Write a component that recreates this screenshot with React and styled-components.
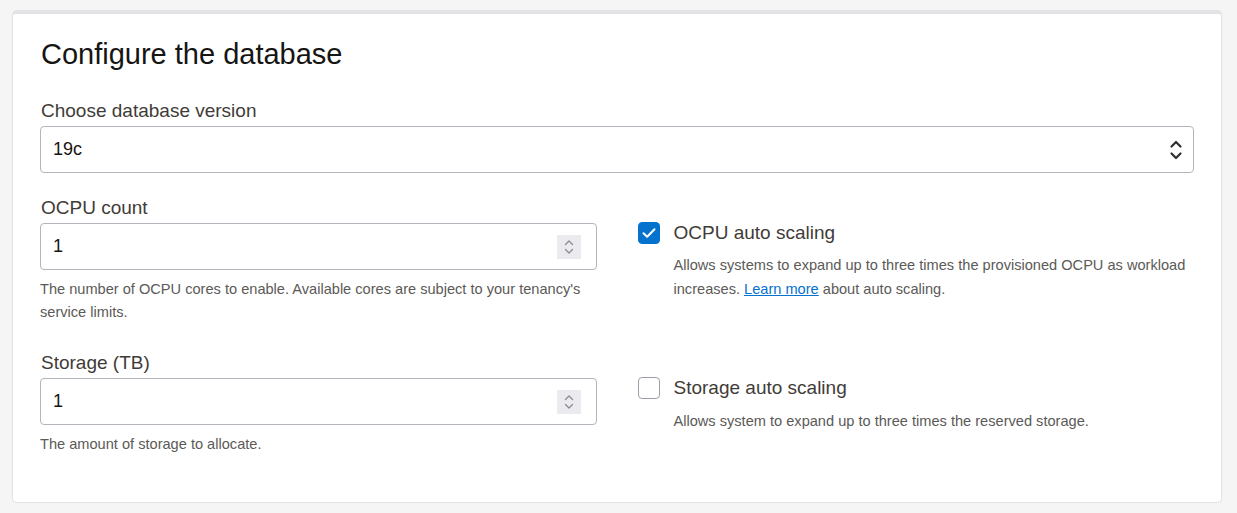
import styled, { createGlobalStyle } from 'styled-components'

const GlobalStyle = createGlobalStyle`
  body {
    margin: 0;
    background: #f5f5f5;
    font-family: "Liberation Sans", Arial, sans-serif;
  }
`

export default function App() {
  return (
    <>
      <GlobalStyle />
      <Page>
        <Card>
          <Title>Configure the database</Title>
          <Field>
            <Label>Choose database version</Label>
            <InputBox>
              <Value>19c</Value>
              <SelectArrows />
            </InputBox>
          </Field>
          <Grid>
            <Field>
              <Label>OCPU count</Label>
              <InputBox>
                <Value>1</Value>
                <Spinner />
              </InputBox>
              <Help>
                The number of OCPU cores to enable. Available cores are subject
                to your tenancy's service limits.
              </Help>
            </Field>
            <CheckField>
              <CheckRow>
                <Checkbox checked>
                  <svg width="14" height="12" viewBox="0 0 14 12">
                    <path
                      d="M1.5 6.2 L5.2 9.8 L12.5 2.2"
                      fill="none"
                      stroke="#fff"
                      strokeWidth="2"
                      strokeLinecap="round"
                      strokeLinejoin="round"
                    />
                  </svg>
                </Checkbox>
                <CheckLabel>OCPU auto scaling</CheckLabel>
              </CheckRow>
              <CheckHelp>
                Allows systems to expand up to three times the provisioned OCPU
                as workload increases. <Link href="#">Learn more</Link> about
                auto scaling.
              </CheckHelp>
            </CheckField>
            <Field>
              <Label>Storage (TB)</Label>
              <InputBox>
                <Value>1</Value>
                <Spinner />
              </InputBox>
              <Help>The amount of storage to allocate.</Help>
            </Field>
            <CheckField>
              <CheckRow>
                <Checkbox />
                <CheckLabel>Storage auto scaling</CheckLabel>
              </CheckRow>
              <CheckHelp $extra={1}>
                Allows system to expand up to three times the reserved storage.
              </CheckHelp>
            </CheckField>
          </Grid>
        </Card>
      </Page>
    </>
  )
}

function SelectArrows() {
  return (
    <Arrows>
      <svg width="14" height="24" viewBox="0 0 14 24">
        <path
          d="M2.5 8.5 L7 4 L11.5 8.5 M2.5 15.5 L7 20 L11.5 15.5"
          fill="none"
          stroke="#2f2f2f"
          strokeWidth="2.2"
          strokeLinecap="round"
          strokeLinejoin="round"
        />
      </svg>
    </Arrows>
  )
}

function Spinner() {
  return (
    <SpinBox>
      <svg width="12" height="18" viewBox="0 0 12 18">
        <path
          d="M2.5 6.5 L6 3 L9.5 6.5 M2.5 11.5 L6 15 L9.5 11.5"
          fill="none"
          stroke="#8a8a96"
          strokeWidth="1.3"
          strokeLinecap="round"
          strokeLinejoin="round"
        />
      </svg>
    </SpinBox>
  )
}

const Page = styled.div`
  padding: 10px 15px 12px 12px;
`

const Card = styled.div`
  background: #fff;
  border: 1px solid #e2e2e2;
  border-top: 4px solid #e3e3e6;
  border-radius: 5px;
  padding: 23px 27px 46px 27px;
`

const Title = styled.h1`
  margin: 0 0 29px 1px;
  font-size: 29px;
  font-weight: 400;
  line-height: 34px;
  color: #161513;
`

const Grid = styled.div`
  display: grid;
  grid-template-columns: 1fr 1fr;
  column-gap: 41px;
  row-gap: 28px;
  margin-top: 24px;
`

const Field = styled.div`
  display: flex;
  flex-direction: column;
`

const Label = styled.label`
  font-size: 19px;
  line-height: 22px;
  color: #3f3c38;
  margin-bottom: 4px;
  padding-left: 1px;
`

const InputBox = styled.div`
  display: flex;
  align-items: center;
  height: 47px;
  box-sizing: border-box;
  border: 1px solid #b4b4bc;
  border-radius: 4px;
  padding: 0 14px 0 12px;
  background: #fff;
`

const Value = styled.span`
  flex: 1;
  font-size: 18px;
  color: #161513;
`

const Arrows = styled.span`
  display: flex;
  margin-right: -4px;
`

const SpinBox = styled.span`
  display: flex;
  align-items: center;
  justify-content: center;
  width: 24px;
  height: 24px;
  background: #ebebef;
  margin-right: 1px;
`

const Help = styled.p`
  margin: 8px 0 0;
  font-size: 14.6px;
  line-height: 23px;
  color: #5b5a57;
`

const CheckField = styled.div`
  padding-top: 25px;
`

const CheckRow = styled.div`
  display: flex;
  align-items: center;
  gap: 14px;
`

const Checkbox = styled.span`
  display: flex;
  align-items: center;
  justify-content: center;
  width: 22px;
  height: 22px;
  box-sizing: border-box;
  border-radius: 4px;
  border: 1px solid ${(p) => (p.checked ? '#0572ce' : '#9e9ea8')};
  background: ${(p) => (p.checked ? '#0572ce' : '#fff')};
`

const CheckLabel = styled.span`
  font-size: 19px;
  line-height: 22px;
  color: #3f3c38;
`

const CheckHelp = styled.p`
  margin: ${(p) => 8.5 + (p.$extra || 0)}px 0 0 36px;
  font-size: 14.6px;
  line-height: 24px;
  color: #5b5a57;
`

const Link = styled.a`
  color: #0572ce;
  text-decoration: underline;
`
